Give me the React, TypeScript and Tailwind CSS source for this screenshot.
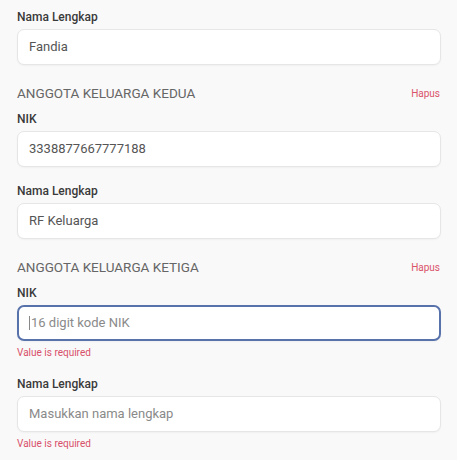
import React from "react";

type FieldProps = {
  label: string;
  value?: string;
  placeholder?: string;
  focused?: boolean;
  error?: string;
};

function Field({ label, value, placeholder, focused, error }: FieldProps) {
  return (
    <div className="flex flex-col">
      <label className="text-[12px] leading-4 font-medium text-[#3a3a3a]">{label}</label>
      <div
        className={
          focused
            ? "mt-1 h-9 rounded-[7px] bg-white border-2 border-[#5872ac] flex items-center pl-[10px] shadow-[0_1px_2px_rgba(0,0,0,0.04)]"
            : "mt-1 h-9 rounded-[7px] bg-white border border-[#e6e6e6] flex items-center pl-[11px] shadow-[0_1px_2px_rgba(0,0,0,0.04)]"
        }
      >
        {focused && <span className="w-px h-[14px] bg-[#888888] mr-px" />}
        {value ? (
          <span className="text-[13px] text-[#555555]">{value}</span>
        ) : (
          <span className="text-[13px] text-[#8a8a8a]">{placeholder}</span>
        )}
      </div>
      {error && (
        <span className="mt-[5px] text-[10px] leading-[14px] text-[#d8506a]">{error}</span>
      )}
    </div>
  );
}

function SectionHeader({ title }: { title: string }) {
  return (
    <div className="mt-[18px] mb-2 flex items-center justify-between">
      <span className="text-[13.5px] leading-5 text-[#666666] uppercase">{title}</span>
      <span className="text-[10px] text-[#d9536a] pr-px">Hapus</span>
    </div>
  );
}

export default function App() {
  return (
    <div
      className="w-[457px] h-[460px] bg-[#f9f9f9] overflow-hidden pl-[17px] pr-[16px] pt-[9px]"
      style={{ fontFamily: "Roboto, 'Noto Sans', sans-serif" }}
    >
      <Field label="Nama Lengkap" value="Fandia" />

      <SectionHeader title="Anggota Keluarga Kedua" />
      <div className="flex flex-col gap-4">
        <Field label="NIK" value="3338877667777188" />
        <Field label="Nama Lengkap" value="RF Keluarga" />
      </div>

      <SectionHeader title="Anggota Keluarga Ketiga" />
      <div className="flex flex-col gap-4">
        <Field label="NIK" placeholder="16 digit kode NIK" focused error="Value is required" />
        <Field label="Nama Lengkap" placeholder="Masukkan nama lengkap" error="Value is required" />
      </div>
    </div>
  );
}
